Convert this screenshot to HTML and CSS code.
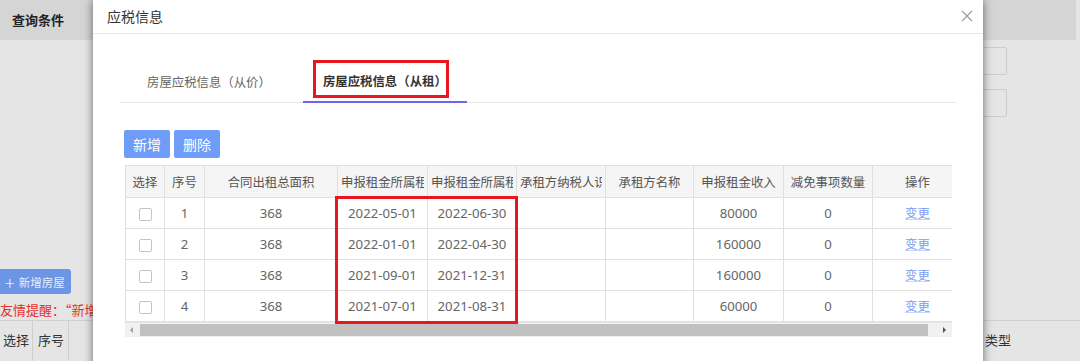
FILE: index.html
```html
<!DOCTYPE html>
<html lang="zh-CN">
<head>
  <meta charset="UTF-8" />
  <title>应税信息</title>
  <link rel="stylesheet" href="styles.css">
</head>
<body>
  <div class="page">
    <div class="topbar">查询条件</div>
    <div class="filters">
      <div class="filter-input"></div>
      <div class="filter-input"></div>
    </div>
    <div class="page-tools">
      <button class="add-house"><span class="plus">+</span>新增房屋</button>
    </div>
    <div class="notice">友情提醒：“新增房屋”</div>
    <div class="house-table">
      <div class="ht-cell ht-select">选择</div>
      <div class="ht-cell ht-no">序号</div>
      <div class="ht-cell ht-rest"></div>
      <div class="ht-cell ht-type">类型</div>
    </div>
  </div>

  <div class="modal">
    <div class="modal-header">
      <span class="modal-title">应税信息</span>
      <svg class="modal-close" width="12" height="12" viewBox="0 0 12 12">
        <path d="M1 1 L11 11 M11 1 L1 11" stroke="#9a9a9a" stroke-width="1.1" fill="none"/>
      </svg>
    </div>

    <div class="modal-body">
      <div class="tabs">
        <div class="tab">房屋应税信息（从价）</div>
        <div class="tab active">房屋应税信息（从租）</div>
      </div>

      <div class="toolbar">
        <button class="btn">新增</button>
        <button class="btn">删除</button>
      </div>

      <div class="grid-wrap">
        <table class="grid">
          <colgroup>
            <col style="width:39px"><col style="width:40px"><col style="width:133px">
            <col style="width:90px"><col style="width:89px"><col style="width:89px">
            <col style="width:88px"><col style="width:90px"><col style="width:89px">
            <col style="width:90px">
          </colgroup>
          <thead>
            <tr>
              <th>选择</th><th>序号</th><th>合同出租总面积</th>
              <th><div class="clip">申报租金所属租</div></th>
              <th><div class="clip">申报租金所属租</div></th>
              <th><div class="clip">承租方纳税人识</div></th>
              <th>承租方名称</th><th>申报租金收入</th><th>减免事项数量</th><th>操作</th>
            </tr>
          </thead>
          <tbody>
            <tr>
              <td><span class="check"></span></td><td>1</td><td>368</td>
              <td>2022-05-01</td><td>2022-06-30</td><td></td><td></td>
              <td>80000</td><td>0</td><td><a class="link">变更</a></td>
            </tr>
            <tr>
              <td><span class="check"></span></td><td>2</td><td>368</td>
              <td>2022-01-01</td><td>2022-04-30</td><td></td><td></td>
              <td>160000</td><td>0</td><td><a class="link">变更</a></td>
            </tr>
            <tr>
              <td><span class="check"></span></td><td>3</td><td>368</td>
              <td>2021-09-01</td><td>2021-12-31</td><td></td><td></td>
              <td>160000</td><td>0</td><td><a class="link">变更</a></td>
            </tr>
            <tr>
              <td><span class="check"></span></td><td>4</td><td>368</td>
              <td>2021-07-01</td><td>2021-08-31</td><td></td><td></td>
              <td>60000</td><td>0</td><td><a class="link">变更</a></td>
            </tr>
          </tbody>
        </table>
        <div class="hscroll">
          <span class="arrow-left"></span>
          <span class="thumb"></span>
          <span class="arrow-right"></span>
        </div>
      </div>
    </div>

    <!-- annotation boxes -->
    <div class="mark mark-tab"></div>
    <div class="mark mark-dates"></div>
  </div>
</body>
</html>
```

FILE: styles.css
```css
body {
  margin: 0;
  width: 1080px;
  height: 361px;
  overflow: hidden;
  background-color: #e5e5e5;
  font-family: "Noto Sans", "Noto Sans CJK SC", sans-serif;
  position: relative;
}
.page {
  display: flex;
  flex-direction: column;
  height: 361px;
}
.topbar {
  width: 1064px;
  height: 40px;
  line-height: 40px;
  padding-left: 12px;
  background-color: #d5d5d5;
  font-size: 13px;
  font-weight: bold;
  color: #222;
}
.filters {
  display: flex;
  flex-direction: column;
  align-items: flex-end;
  gap: 14px;
  padding-top: 7px;
  padding-right: 73px;
}
.filter-input {
  width: 150px;
  height: 26px;
  border: 1px solid #cdcdcd;
  border-radius: 2px;
}
.page-tools {
  margin-top: 152px;
}
.add-house {
  width: 71px;
  height: 25px;
  border: none;
  border-radius: 0 3px 3px 0;
  background-color: #6c95e6;
  color: #e6edfb;
  font-family: "Noto Sans CJK SC", sans-serif;
  font-size: 11.5px;
  padding: 0 0 0 5px;
  display: flex;
  align-items: center;
  white-space: nowrap;
}
.plus {
  font-size: 18px;
  font-weight: 300;
  margin-right: 4px;
  line-height: 1;
}
.notice {
  margin-top: 6px;
  font-family: "Noto Sans CJK SC", sans-serif;
  font-size: 13px;
  line-height: 20px;
  color: #e4322b;
  white-space: nowrap;
}
.house-table {
  display: flex;
  border-top: 1px solid #cfcfcf;
  height: 40px;
}
.ht-cell {
  font-size: 13px;
  color: #333;
  line-height: 38px;
  border-right: 1px solid #cfcfcf;
}
.ht-select { width: 29px; padding-left: 3px; }
.ht-no { width: 30px; padding-left: 5px; }
.ht-rest { flex: 1; border-right: none; }
.ht-type { width: 95px; border-right: none; }

.modal {
  position: absolute;
  left: 93px;
  top: 0;
  width: 890px;
  height: 380px;
  background-color: #fff;
  box-shadow: 0 0 9px rgba(0, 0, 0, 0.55);
}
.modal-header {
  height: 33px;
  border-bottom: 1px solid #e8e8e8;
  display: flex;
  align-items: center;
  justify-content: space-between;
  padding: 0 10px 0 14px;
}
.modal-title {
  font-size: 14px;
  color: #333;
  margin-top: -2px;
}
.modal-close {
  margin-top: -2px;
}
.modal-body {
  padding: 28px 27px 0;
}
.tabs {
  display: flex;
  gap: 12px;
  height: 40px;
  border-bottom: 1px solid #e6e6e6;
}
.tab {
  padding: 0 20px;
  margin-left: 7px;
  line-height: 40px;
  font-family: "Noto Sans CJK TC", "Noto Sans CJK SC", sans-serif;
  font-size: 12.4px;
  color: #666;
  white-space: nowrap;
}
.tab + .tab {
  margin-left: 0;
}
.tab.active {
  color: #333;
  font-weight: bold;
  border-bottom: 2px solid #6f63f6;
  height: 39px;
  line-height: 39px;
}
.toolbar {
  display: flex;
  gap: 4px;
  margin: 27px 0 0 4px;
}
.btn {
  width: 46px;
  height: 28px;
  border: none;
  border-radius: 2px;
  background-color: #6e9cf8;
  color: #fff;
  font-family: inherit;
  font-size: 14px;
  padding: 0;
}
.grid-wrap {
  margin: 7px 0 0 5px;
  width: 827px;
  overflow: hidden;
}
.grid {
  table-layout: fixed;
  border-collapse: collapse;
  width: 837px;
}
.grid th,
.grid td {
  border: 1px solid #e0e0e0;
  padding: 0 3px;
  text-align: center;
  white-space: nowrap;
  overflow: hidden;
}
.grid th {
  height: 31px;
  background-color: #f5f5f5;
  color: #555;
  font-weight: normal;
  font-size: 12.4px;
}
.grid td {
  height: 30px;
  color: #666;
  font-size: 13.2px;
}
.clip {
  overflow: hidden;
  text-align: left;
}
.check {
  display: inline-block;
  width: 11px;
  height: 11px;
  border: 1px solid #c4c4c4;
  border-radius: 2px;
  vertical-align: middle;
  background-color: #fff;
}
.link {
  color: #7b9ef0;
  font-size: 12.4px;
  text-decoration: underline;
  text-decoration-color: #c7d6f7;
}
.hscroll {
  position: relative;
  height: 14px;
  background-color: #f1f1f1;
  border-top: 1px solid #e6e6e6;
}
.thumb {
  position: absolute;
  left: 15px;
  top: 1px;
  width: 788px;
  height: 12px;
  background-color: #c1c1c1;
}
.arrow-left {
  position: absolute;
  left: 5px;
  top: 4px;
  border-top: 3px solid transparent;
  border-bottom: 3px solid transparent;
  border-right: 3px solid #a3a3a3;
}
.arrow-right {
  position: absolute;
  right: 6px;
  top: 4px;
  border-top: 3px solid transparent;
  border-bottom: 3px solid transparent;
  border-left: 3px solid #505050;
}
.mark {
  position: absolute;
  border: 3px solid #e8161f;
  box-sizing: border-box;
}
.mark-tab {
  left: 220px;
  top: 60px;
  width: 136px;
  height: 38px;
}
.mark-dates {
  left: 242px;
  top: 196px;
  width: 183px;
  height: 128px;
}
```
